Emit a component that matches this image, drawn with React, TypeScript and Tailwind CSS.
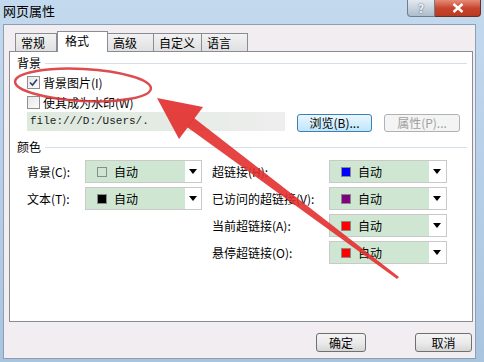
import React from "react";

const font = { fontFamily: '"Noto Sans CJK SC", "Noto Sans", sans-serif' };

const Check: React.FC<{ checked?: boolean }> = ({ checked }) => (
  <div className="w-[13px] h-[13px] border border-[#8e8f8f] bg-gradient-to-br from-[#e6e6e6] to-[#fbfbfb] flex items-center justify-center">
    {checked && (
      <svg width="9" height="9" viewBox="0 0 9 9">
        <path d="M1 4.5 L3.5 7 L8 1.5" fill="none" stroke="#2a3f6e" strokeWidth="1.6" />
      </svg>
    )}
  </div>
);

const Arrow = () => (
  <svg width="8" height="5" viewBox="0 0 8 5">
    <path d="M0 0 H8 L4 5 Z" fill="#000" />
  </svg>
);

const ColorSelect: React.FC<{ color: string; width: string }> = ({ color, width }) => (
  <div className={`${width} h-[23px] border border-[#c9c9c9] flex bg-white`}>
    <div className="w-[99px] h-full bg-[#cfe7d2] flex items-center pl-[11px]">
      <div className="w-[10px] h-[10px] border border-[#8a8a8a]" style={{ background: color }} />
      <span className="ml-[7px] text-[12px] leading-none text-black">自动</span>
    </div>
    <div className="flex-1 flex items-center justify-center pr-[1px]">
      <Arrow />
    </div>
  </div>
);

const Section: React.FC<{ title: string }> = ({ title }) => (
  <div className="flex items-center pl-[7px] pr-[5px] h-[14px]">
    <span className="text-[12px] leading-[14px] text-black">{title}</span>
    <div className="flex-1 ml-[4px] h-px bg-[#d5dfe5]" />
  </div>
);

const tabs = ["常规", "格式", "高级", "自定义", "语言"];
const tabWidths = ["w-[42px]", "w-[51px]", "w-[46px]", "w-[48px]", "w-[46px]"];

const App: React.FC = () => {
  return (
    <div
      className="relative w-[484px] h-[362px] overflow-hidden bg-gradient-to-b from-[#c3d9ee] via-[#b6cfe8] to-[#a9c4df]"
      style={font}
    >
      {/* title bar */}
      <div className="h-[24px] flex items-start relative">
        <span className="ml-[3px] mt-[2px] text-[13px] leading-[18px] text-black">网页属性</span>
        <div className="ml-auto mr-[3px] flex">
          <div className="w-[28px] h-[17px] rounded-bl-[4px] border border-[#6d7e93] border-t-0 bg-gradient-to-b from-[#e2e9f1] to-[#aebccb] flex items-center justify-center text-[11px] text-white font-bold leading-none">
            <span className="text-[#f4f7fb] [text-shadow:0_0_2px_#445]">?</span>
          </div>
          <div className="w-[46px] h-[17px] rounded-br-[4px] border border-[#6a2f24] border-t-0 border-l-0 bg-gradient-to-b from-[#e48b77] via-[#c9452d] to-[#b83a22] flex items-center justify-center">
            <svg width="12" height="10" viewBox="0 0 12 10">
              <path d="M1.5 1 L10.5 9 M10.5 1 L1.5 9" stroke="#fff" strokeWidth="2.4" />
            </svg>
          </div>
        </div>
      </div>

      {/* body */}
      <div className="ml-[3px] w-[473px] h-[335px] bg-[#f1edf1] border border-[#8f9fb3] pl-[5px] pr-[2px] pt-[6px] text-black">
        {/* tabs */}
        <div className="flex items-end h-[20px] pl-[6px] relative z-10">
          {tabs.map((t, i) =>
            i === 1 ? (
              <div
                key={t}
                className={`${tabWidths[i]} h-[21px] -mb-px bg-white border border-[#898c95] border-b-0 pl-[7px] pt-[1px] text-[12px] leading-[16px]`}
              >
                {t}
              </div>
            ) : (
              <div
                key={t}
                className={`${tabWidths[i]} h-[18px] bg-gradient-to-b from-[#f2f2f2] to-[#e0e0e0] border border-[#898c95] border-b-0 ${
                  i === 0 ? "" : "border-l-0"
                } pl-[5px] pt-[1px] text-[12px] leading-[16px]`}
              >
                {t}
              </div>
            )
          )}
        </div>

        {/* tab panel */}
        <div className="h-[271px] bg-white border border-[#898c95] pt-[4px]">
          <Section title="背景" />
          <div className="mt-[6px] pl-[17px] flex items-center h-[13px]">
            <Check checked />
            <span className="ml-[3px] text-[12px] leading-[13px]">背景图片(I)</span>
          </div>
          <div className="mt-[7px] pl-[17px] flex items-center h-[13px]">
            <Check />
            <span className="ml-[3px] text-[12px] leading-[13px]">使其成为水印(W)</span>
          </div>
          <div className="mt-[3px] pl-[17px] flex items-start">
            <div className="w-[258px] h-[19px] bg-gradient-to-r from-[#dfeadf] via-[#e3ebe3] to-[#eeeeee] flex items-center pl-[3px]">
              <span className="text-[11px] leading-none text-[#222]" style={{ fontFamily: '"Liberation Mono", monospace' }}>
                file:///D:/Users/.
              </span>
            </div>
            <div className="ml-[12px] mt-[2px] w-[75px] h-[18px] rounded-[3px] border border-[#3c7fb1] bg-gradient-to-b from-[#eaf6fd] to-[#bee6fd] flex items-center justify-center text-[12px] leading-none">
              浏览(B)...
            </div>
            <div className="ml-[12px] mt-[2px] w-[76px] h-[18px] rounded-[3px] border border-[#adb2b5] bg-[#f4f4f4] flex items-center justify-center text-[12px] leading-none text-[#a0a0a0]">
              属性(P)...
            </div>
          </div>

          <div className="mt-[8px]">
            <Section title="颜色" />
          </div>

          <div className="mt-[6px] pl-[17px] flex flex-col gap-[4px] text-[12px] leading-none">
            {[
              ["背景(C):", "#cfe7d2", "超链接(H):", "#0000ff"],
              ["文本(T):", "#000000", "已访问的超链接(V):", "#800080"],
              ["", "", "当前超链接(A):", "#ff0000"],
              ["", "", "悬停超链接(O):", "#ff0000"],
            ].map(([l1, c1, l2, c2], i) => (
              <div key={i} className="flex items-center h-[23px]">
                <div className="w-[58px]">{l1}</div>
                {c1 ? <ColorSelect color={c1} width="w-[117px]" /> : <div className="w-[117px]" />}
                <div className="ml-[10px] w-[117px]">{l2}</div>
                <ColorSelect color={c2} width="w-[118px]" />
              </div>
            ))}
          </div>
        </div>

        {/* buttons */}
        <div className="mt-[11px] flex justify-end gap-[49px] pr-px">
          <div className="w-[50px] h-[19px] rounded-[3px] border border-[#707070] bg-gradient-to-b from-[#f3f3f3] via-[#ebebeb] to-[#d6d6d6] flex items-center justify-center text-[12px] leading-none">
            确定
          </div>
          <div className="w-[57px] h-[19px] rounded-[3px] border border-[#707070] bg-gradient-to-b from-[#f3f3f3] via-[#ebebeb] to-[#d6d6d6] flex items-center justify-center text-[12px] leading-none">
            取消
          </div>
        </div>
      </div>

      {/* annotation overlay */}
      <svg className="absolute left-0 top-0 pointer-events-none" width="484" height="362" viewBox="0 0 484 362">
        <ellipse
          cx="83"
          cy="85"
          rx="68"
          ry="16"
          transform="rotate(3 83 85)"
          fill="none"
          stroke="#d9393b"
          strokeWidth="2.5"
          opacity="0.9"
        />
        <polygon points="157,98 203,107 179,139" fill="#e2302f" opacity="0.92" />
        <polygon points="187,127 194,118 399,277 397,279" fill="#e2302f" opacity="0.9" />
      </svg>
    </div>
  );
};

export default App;
